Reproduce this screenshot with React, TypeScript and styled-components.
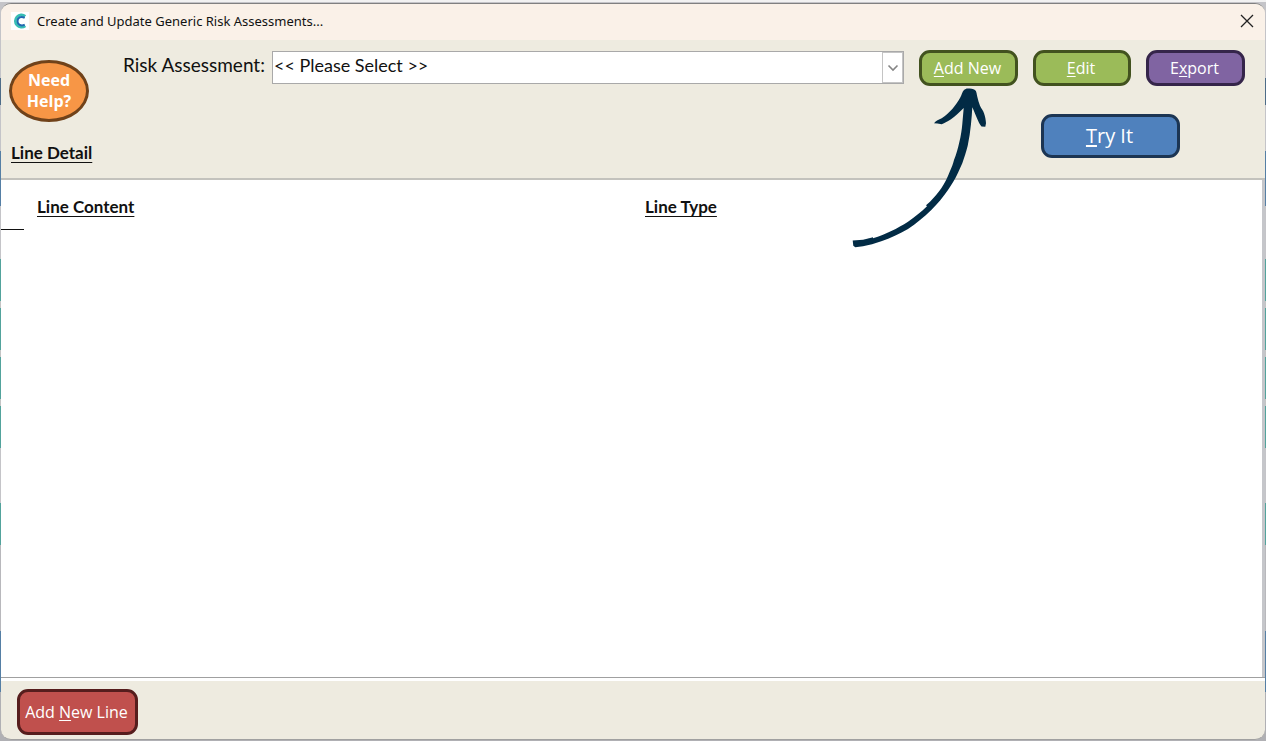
import React from "react";
import styled, { createGlobalStyle, css } from "styled-components";

const GlobalStyle = createGlobalStyle`
  * { box-sizing: border-box; }
  html, body { margin: 0; padding: 0; }
  body { font-family: "Open Sans", "Noto Sans", sans-serif; color: #111; }
  h1, h2, h3 { margin: 0; }
`;

const labelFont = css`
  font-family: Lato, "Open Sans", sans-serif;
`;

const Desktop = styled.div`
  min-height: 100vh;
  display: flex;
  flex-direction: column;
  padding: 3px 1px 1px;
  background: linear-gradient(
    #f2f2f2 0 2px, #c4c4c8 2px 78px, #4d6c88 78px 105px, #c4c4c8 105px 151px,
    #557fa5 151px 206px, #c4c4c8 206px 259px, #52a39c 259px 301px,
    #c4c4c4 301px 308px, #52a39c 308px 350px, #c4c4c4 350px 357px,
    #52a39c 357px 399px, #c4c4c4 399px 406px, #52a39c 406px 448px,
    #c4c4c8 448px 503px, #52a39c 503px 545px, #b8b8bc 545px 631px,
    #557fa5 631px 692px, #b0b0b4 692px
  );
`;

const Window = styled.main`
  flex: 1;
  display: flex;
  flex-direction: column;
  overflow: hidden;
  border-top: 1px solid #808080;
  border-bottom: 1px solid #a0a0a0;
  border-radius: 10px;
  background: #eeebe0;
`;

const TitleBar = styled.header`
  height: 36px;
  flex: none;
  display: flex;
  align-items: center;
  gap: 8px;
  padding: 0 10px 2px;
  background: #faf1e8;
`;

const Title = styled.h1`
  flex: 1;
  font-family: "Noto Sans", sans-serif;
  font-size: 13px;
  font-weight: 400;
  line-height: 20px;
`;

const CloseButton = styled.button`
  width: 16px;
  height: 16px;
  padding: 0;
  border: 0;
  background: none;
  display: grid;
  place-items: center;
`;

const Toolbar = styled.section`
  height: 140px;
  flex: none;
  display: flex;
  gap: 34px;
  padding: 10px 20px 0 8px;
  border-bottom: 2px solid #c3c2bd;
`;

const SideColumn = styled.div`
  width: 80px;
  padding-top: 10px;
  display: flex;
  flex-direction: column;
  gap: 19px;
`;

const HelpButton = styled.button`
  width: 80px;
  height: 62px;
  padding: 0;
  border: 3px solid #70421a;
  border-radius: 50%;
  background: #f79646;
  color: #fff;
  font: 700 16px/21px "Open Sans", sans-serif;
`;

const Heading = styled.h2`
  ${labelFont}
  font-size: 17px;
  font-weight: 700;
  line-height: 24px;
  white-space: nowrap;
  text-decoration: underline;
  text-underline-offset: 3px;
`;

const SideHeading = styled(Heading)`
  padding-left: 2px;
`;

const Controls = styled.div`
  flex: 1;
  display: flex;
  flex-direction: column;
  gap: 28px;
`;

const ControlRow = styled.div`
  display: flex;
  align-items: flex-start;
  gap: 15px;
`;

const SelectField = styled.div`
  flex: 1;
  display: flex;
  align-items: flex-start;
  gap: 7px;
  padding-top: 1px;
`;

const FieldLabel = styled.label`
  ${labelFont}
  font-size: 19px;
  line-height: 28px;
  white-space: nowrap;
`;

const SelectBox = styled.div`
  flex: 1;
  display: grid;
  grid-template-columns: 1fr 21px;
  height: 33px;
  border: 1px solid #a9a9a9;
  background: #fff;
`;

const Select = styled.select`
  ${labelFont}
  grid-area: 1 / 1 / 2 / 3;
  appearance: none;
  min-width: 0;
  height: 26px;
  padding: 0 24px 0 1px;
  border: 0;
  background: none;
  color: #111;
  font-size: 18px;
`;

const DropMark = styled.span`
  grid-area: 1 / 2;
  display: grid;
  place-items: center;
  border: 1px solid #c4c4c4;
  pointer-events: none;
`;

const tones = {
  green: ["#9bbb59", "#42521f"],
  purple: ["#8064a2", "#35254a"],
  blue: ["#4f81bd", "#1c3553"],
  red: ["#c0504d", "#561d1d"],
};

const ActionButton = styled.button<{ $tone: keyof typeof tones; $width: number; $height?: number; $large?: boolean }>`
  width: ${(p) => p.$width}px;
  height: ${(p) => p.$height ?? 36}px;
  flex: none;
  padding: 0 2px 0 0;
  border: 3px solid ${(p) => tones[p.$tone][1]};
  border-radius: 11px;
  background: ${(p) => tones[p.$tone][0]};
  color: #fff;
  font-family: "Open Sans", sans-serif;
  font-size: ${(p) => (p.$large ? 20 : 16)}px;
  line-height: 24px;
  white-space: nowrap;
`;

const AccessKey = styled.span`
  text-decoration: underline;
  text-underline-offset: 2px;
`;

const Pointed = styled.div`
  position: relative;
  display: flex;
`;

const Arrow = styled.svg`
  position: absolute;
  top: 36px;
  left: -69px;
  z-index: 1;
  pointer-events: none;
`;

const TryRow = styled.div`
  display: flex;
  justify-content: flex-end;
  padding-right: 65px;
`;

const Lines = styled.section`
  flex: 1;
  display: grid;
  grid-template-columns: 608fr 617fr;
  align-content: start;
  padding: 15px 0 0 36px;
  border-right: 3px solid #c5c6ca;
  background: #fff;
`;

const Marker = styled.hr`
  grid-column: 1 / 3;
  width: 23px;
  height: 1px;
  margin: 10px 0 0 -36px;
  border: 0;
  background: #111;
`;

const Footer = styled.footer`
  height: 62px;
  flex: none;
  padding: 11px 16px 0;
  border-top: 1px solid #a0a0a0;
  box-shadow: inset 0 3px #fff;
`;

export default function App() {
  return (
    <>
      <GlobalStyle />
      <Desktop>
        <Window>
          <TitleBar>
            <svg width="18" height="18" viewBox="0 0 18 18" aria-hidden="true">
              <rect width="18" height="18" fill="#fff" />
              <path d="M14.2 4.3A6 6 0 1 0 14.2 13.7" fill="none" stroke="#38bdb4" strokeWidth="3" />
              <path d="M13.7 5.8C9.8 3.6 6.4 6 6.5 9.2S10 14.8 13.7 12.7" fill="none" stroke="#2268b0" strokeWidth="2" />
            </svg>
            <Title>Create and Update Generic Risk Assessments...</Title>
            <CloseButton aria-label="Close">
              <svg width="14" height="14" viewBox="0 0 14 14">
                <path d="M1 1l12 12M13 1L1 13" stroke="#222" strokeWidth="1.3" />
              </svg>
            </CloseButton>
          </TitleBar>

          <Toolbar>
            <SideColumn>
              <HelpButton>
                Need
                <br />
                Help?
              </HelpButton>
              <SideHeading>Line Detail</SideHeading>
            </SideColumn>
            <Controls>
              <ControlRow>
                <SelectField>
                  <FieldLabel htmlFor="assessment">Risk Assessment:</FieldLabel>
                  <SelectBox>
                    <Select id="assessment">
                      <option>&lt;&lt; Please Select &gt;&gt;</option>
                    </Select>
                    <DropMark>
                      <svg width="12" height="8" viewBox="0 0 12 8" fill="none">
                        <path d="M1.5 1.5l4.5 4.5 4.5-4.5" stroke="#858585" strokeWidth="1.6" />
                      </svg>
                    </DropMark>
                  </SelectBox>
                </SelectField>
                <Pointed>
                  <ActionButton $tone="green" $width={99}>
                    <AccessKey>A</AccessKey>dd New
                  </ActionButton>
                  <Arrow width="140" height="164" viewBox="0 0 140 164" aria-hidden="true">
                    <path
                      fill="#022b45"
                      d="M2.7 154.5L13 153.7L23 151.2V152.2C29.5 150.3 35.5 147.8 41.3 145C47 142.3 53 139 58 135.7C65 131 71 126 77 120.3L76 119.2L80 115.8C84 111.5 88 107 91.3 102.3C94.8 97 97.5 91.5 99.7 85.7C101.5 82 103 78 104 74C106.3 68.5 108 62 109.3 56.3C110.8 50 111.8 44 112.3 38L113.7 22C109.5 26 105.5 30 101 33.3C97.8 35.5 94.7 37 91.7 38.3L87.5 37.4L84 37.2C86 34.6 88.8 34 91.7 32.3C95.7 30 99 26.5 102.3 23C105.3 19.5 108 15.5 110 12C111.8 9.3 112.2 5.7 114 4C115 3 116.3 2.4 117.7 2.4C120.3 2.4 123.3 2.7 125 4C126.7 5.5 126.7 8.5 127.3 10.7C128 13.8 128.8 16.8 130 19.7C131.2 22.4 133.2 24.5 134 27.3C135.2 30.6 135.8 34 136 37.3L135.3 40.8L131.5 40.4C129.6 38.5 128.5 35.8 127.3 33C125.5 29.2 124.3 25.3 122.3 21.3C122 27 121.6 32.5 121 38C120.3 45.5 119.2 52.7 117.7 59.7C116.2 65.7 114.2 71.7 112.3 77.3L108 86.7C105.3 92.7 101.8 98.5 98 104C93 111 87.5 118 81.3 124C74 131 66.3 137.5 58 143C49.5 148 40.5 152 31.3 155.3C25 157.5 19 159.2 13 160.3L5.3 161.3L3.3 159.8Z"
                    />
                  </Arrow>
                </Pointed>
                <ActionButton $tone="green" $width={98}>
                  <AccessKey>E</AccessKey>dit
                </ActionButton>
                <ActionButton $tone="purple" $width={99}>
                  E<AccessKey>x</AccessKey>port
                </ActionButton>
              </ControlRow>
              <TryRow>
                <ActionButton $tone="blue" $width={139} $height={44} $large>
                  <AccessKey>T</AccessKey>ry It
                </ActionButton>
              </TryRow>
            </Controls>
          </Toolbar>

          <Lines>
            <Heading as="h3">Line Content</Heading>
            <Heading as="h3">Line Type</Heading>
            <Marker />
          </Lines>

          <Footer>
            <ActionButton $tone="red" $width={121} $height={46}>
              Add <AccessKey>N</AccessKey>ew Line
            </ActionButton>
          </Footer>
        </Window>
      </Desktop>
    </>
  );
}
